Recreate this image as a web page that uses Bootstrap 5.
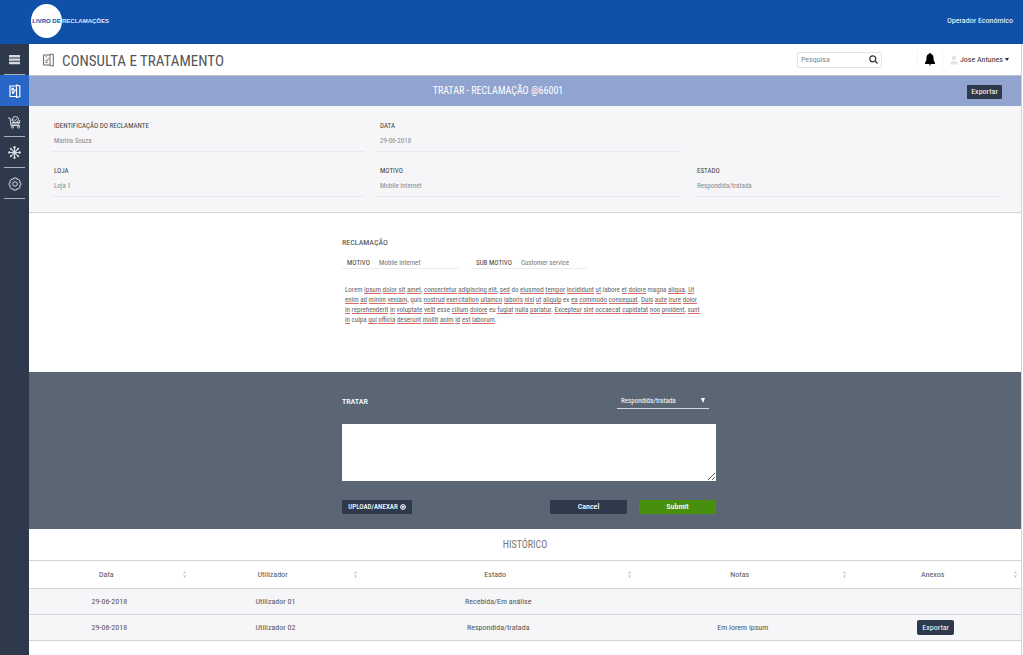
<!DOCTYPE html>
<html lang="pt">
<head>
<meta charset="utf-8">
<meta name="viewport" content="width=device-width, initial-scale=1">
<title>Livro de Reclamações</title>
<link href="https://cdn.jsdelivr.net/npm/bootstrap@5.3.0/dist/css/bootstrap.min.css" rel="stylesheet">
<style>
:root{--navy:#2e394b;--brand:#0f50a9;--rule:#d2d4da}
body{font-family:"Roboto Condensed","Roboto",sans-serif;font-size:8px;line-height:12px;color:#555;background:#fff}
a{color:inherit;text-decoration:none}
svg{display:block;flex:none}
.topbar{height:44px;background:var(--brand);color:#fff;padding:0 10px 2px 31px}
.brandmark{font-family:"Liberation Sans",sans-serif;font-size:6px;font-weight:700;color:#dfeaff}
.disc{width:31px;height:34px;border-radius:50%;background:#fff;color:var(--brand);white-space:nowrap}
.side{width:29px;background:var(--navy);flex:none}
.side a{height:31px;color:#d5dae2;display:flex;align-items:center;justify-content:center;position:relative}
.side a::after{content:"";position:absolute;left:4px;right:4px;bottom:0;height:1px;background:#a9b0bd}
.side a.active{background:#2867c8;color:#fff}
.side a.active::after{display:none}
.page{border-right:1px solid #cfd3dc;margin-right:1px;min-width:0}
.titlebar{height:32px;padding:0 12px 0 14px;border-bottom:1px solid #b9c4cf}
.titlebar h1{font-size:15px;line-height:20px;color:#555;padding-top:2px}
.searchbox{width:85px;height:16px;border:1px solid #e4e4e4;border-radius:2px;padding:0 3px}
.searchbox input{color:#777;border:0;outline:0;min-width:0;background:none;padding:0}
.searchbox input::placeholder{color:#888}
.plain{border:0;background:none;padding:0;color:#333}
.bell{margin-left:35px;padding:2px 7px;border:1px solid #f5f5f5;border-width:0 1px}
.user{margin-left:7px;gap:2px}
.caret{border:2px solid transparent;border-top:3px solid #222;border-bottom:0}
.caption{height:30px;background:#91a4d0;color:#fff;padding-right:19px}
.caption h2,.history h2{font-size:10px;line-height:30px}
.action{background:var(--navy);color:#fff;border:0;border-radius:1px;height:14px;line-height:14px;padding:0}
.export{width:35px;margin-top:2px}
.info{background:#f6f6f9;border-bottom:1px solid var(--rule);padding:12px 19px 15px 22px;display:grid;grid-template-columns:313fr 304fr 308fr;column-gap:13px;row-gap:11px;margin:0;font-size:7px}
.info>div{border-bottom:1px solid #e9e9ee;padding:2px 3px 4px;height:34px}
.info>.blank{border:0}
.info dt{font-weight:400;color:#444}
.info dd{margin:3px 0 0;color:#8a8a8a}
.sheet{width:374px;max-width:100%;margin:0 auto}
.shift{padding-left:8px}
.complaint{height:159px;padding-top:23px}
.complaint h3,.treat h3{font-size:8px;line-height:14px;margin:0}
.complaint h3{color:#444}
.pairs{margin-top:7px;gap:12px;font-size:7px}
.pair{width:117px;border-bottom:1px solid #eee;padding-left:5px;height:12px;line-height:12px;display:flex;gap:9px;color:#444}
.pair span+span{color:#777}
.lorem{font-size:7px;line-height:10px;color:#666;margin:16px 0 0;padding-left:3px;white-space:nowrap}
.lorem u{text-decoration:none;background:linear-gradient(#dd6a6a,#dd6a6a) left bottom/100% 1px no-repeat}
.treat{height:157px;background:#5b6675;color:#fff;padding-top:18px}
.treat select{width:92px;height:19px;margin-right:7px;border:0;border-bottom:1px solid #d5d9df;background:none;color:#fff;appearance:none;padding:4px 4px 0;font-size:7px;outline:0;display:block}
.treat select option{color:#333}
.pick{position:relative}
.pick::after{content:"";position:absolute;right:11px;top:8px;border:2px solid transparent;border-top:5px solid #fff;border-bottom:0}
.treat textarea{height:57px;border:0;background:#fff;margin-top:15px;display:block}
.buttons{margin-top:19px;gap:12px}
.wide{width:77px;font-weight:500}
.upload{width:70px;gap:2px;font-size:7px;font-weight:500}
.submit{background:#498f0e}
.history h2{height:32px;padding-top:1px;color:#777;border-bottom:1px solid var(--rule)}
.log{table-layout:fixed;width:100%;text-align:center;border-collapse:separate;border-spacing:0}
.log th{font-weight:400;height:28px;padding:0 6px 0 0;border-bottom:1px solid var(--rule);position:relative}
.log th svg{position:absolute;right:4px;top:10px}
.log td{height:26px;padding:0;background:#f6f6f9;border-bottom:1px solid var(--rule)}
.log td .action{border-radius:2px;height:15px;width:37px;line-height:15px;display:block;margin:0 auto}
</style>
</head>
<body>
<svg width="0" height="0" class="position-absolute" aria-hidden="true"><symbol id="sort" viewBox="0 0 3 7"><path d="M0 2.500 1.500 0 3 2.500zM0 4.500h3L1.500 7z" fill="#c4c4c4"/></symbol></svg>
<div class="min-vh-100 d-flex flex-column">
<header class="topbar d-flex align-items-center justify-content-between">
  <a href="#" class="brandmark d-flex align-items-center"><span class="disc d-flex align-items-center justify-content-center">LIVRO DE</span><span>RECLAMAÇÕES</span></a>
  <span>Operador Económico</span>
</header>
<div class="d-flex flex-grow-1">
  <nav class="side" aria-label="Menu principal">
    <a href="#" aria-label="Menu"><svg width="11" height="10" viewBox="0 0 11 10" fill="currentColor"><path d="M0 0h11v2.400H0zM0 3.400h11v2.400H0zM0 6.800h11v2.400H0z"/></svg></a>
    <a href="#" class="active" aria-label="Consulta"><svg width="12" height="14" viewBox="0 0 12 14" fill="none" stroke="currentColor" stroke-width="1.200"><path d="M7.500 2H1v10.500h6.500M7.500 1 10.800 2v10.500l-3.300 1zM3 4.300h1.500v1.500H3zM3 9.500h1.700M2.800 7.500 4.200 9 6.500 5.500"/></svg></a>
    <a href="#" aria-label="Compras"><svg width="13" height="14" viewBox="0 0 13 14" fill="none" stroke="currentColor"><path d="M0 3h2l1 7.500h9M3 9h8l1-4M3 5h2"/><circle cx="7.500" cy="4.500" r="3"/><path d="m6 4.500 1.200 1.200L9 3.500M4 7.500h7.500"/><circle cx="4.500" cy="12.200" r="1"/><circle cx="10.500" cy="12.200" r="1"/></svg></a>
    <a href="#" aria-label="Rede"><svg width="13" height="13" viewBox="0 0 13 13" fill="none" stroke="currentColor" stroke-width="1.200"><path d="M6.500 1v11M1 6.500h11M2.700 2.700l7.600 7.600M10.300 2.700l-7.600 7.600"/><g fill="currentColor" stroke="none"><circle cx="6.500" cy="6.500" r="2"/><circle cx="6.500" cy="1.300" r="1.200"/><circle cx="6.500" cy="11.700" r="1.200"/><circle cx="1.300" cy="6.500" r="1.200"/><circle cx="11.700" cy="6.500" r="1.200"/><circle cx="2.800" cy="2.800" r="1"/><circle cx="10.200" cy="2.800" r="1"/><circle cx="2.800" cy="10.200" r="1"/><circle cx="10.200" cy="10.200" r="1"/></g></svg></a>
    <a href="#" aria-label="Definições"><svg width="14" height="14" viewBox="0 0 14 14" fill="none" stroke="currentColor"><path d="M5.500 1h3l.5 1.500 1.500-.4 1.600 2-.7 1.400 1.600.8v1.600l-1.600.8.7 1.500-1.700 1.900-1.400-.5L8.500 13h-3L5 11.600l-1.500.5-1.700-1.900.7-1.500L1 7.900V6.300l1.500-.8-.7-1.400 1.700-2L5 2.500z"/><circle cx="7" cy="7" r="2.300"/></svg></a>
  </nav>
  <main class="page flex-grow-1">
    <div class="titlebar d-flex align-items-center">
      <svg width="11" height="14" viewBox="0 0 11 14" fill="none" stroke="#666"><path d="M7 2H.5v10H7M7 1l3.300.5v11.500L7 12.500zM2.500 4h1.500M2.500 9.500h2M2.300 7l1.300 1.300 2-3"/></svg>
      <h1 class="mb-0 ms-2 me-auto fw-normal">CONSULTA E TRATAMENTO</h1>
      <form class="searchbox d-flex align-items-center" role="search">
        <input type="search" class="flex-grow-1" placeholder="Pesquisa" aria-label="Pesquisa">
        <button type="button" class="plain" aria-label="Procurar"><svg width="9" height="9" viewBox="0 0 9 9" fill="none" stroke="#333" stroke-width="1.200"><circle cx="3.800" cy="3.800" r="3"/><path d="m6 6 2.500 2.500"/></svg></button>
      </form>
      <button type="button" class="plain bell" aria-label="Notificações"><svg width="10" height="13" viewBox="0 0 10 13" fill="#000"><path d="M5 0c.7 0 .9.500.9 1C8 1.500 8.500 3 8.500 5c0 2.500.5 3.500 1.500 4.500V11H0V9.500C1 8.500 1.500 7.500 1.500 5c0-2 .5-3.500 2.600-4 0-.5.2-1 .9-1M3.700 11.500h2.600C6 12.700 4 12.700 3.700 11.500"/></svg></button>
      <button type="button" class="plain user d-flex align-items-center"><svg width="8" height="10" viewBox="0 0 8 10" fill="#e2e2e2"><circle cx="4" cy="3" r="2.200"/><path d="M0 9.500C0 7 2 6 4 6s4 1 4 3.500z"/></svg><span>Jose Antunes</span><span class="caret"></span></button>
    </div>
    <div class="caption d-flex align-items-center">
      <h2 class="mb-0 flex-grow-1 text-center fw-normal">TRATAR - RECLAMAÇÃO @66001</h2>
      <button type="button" class="action export">Exportar</button>
    </div>
    <dl class="info">
      <div><dt>IDENTIFICAÇÃO DO RECLAMANTE</dt><dd>Marina Souza</dd></div>
      <div><dt>DATA</dt><dd>29-06-2018</dd></div>
      <div class="blank"></div>
      <div><dt>LOJA</dt><dd>Loja 1</dd></div>
      <div><dt>MOTIVO</dt><dd>Mobile internet</dd></div>
      <div><dt>ESTADO</dt><dd>Respondida/tratada</dd></div>
    </dl>
    <section class="complaint shift"><div class="sheet">
      <h3 class="fw-normal">RECLAMAÇÃO</h3>
      <div class="d-flex pairs">
        <div class="pair"><span>MOTIVO</span><span>Mobile internet</span></div>
        <div class="pair"><span>SUB MOTIVO</span><span>Customer service</span></div>
      </div>
      <p class="lorem">Lorem <u>ipsum</u> <u>dolor</u> <u>sit</u> <u>amet</u>, <u>consectetur</u> <u>adipiscing</u> <u>elit</u>, <u>sed</u> do <u>eiusmod</u> <u>tempor</u> <u>incididunt</u> <u>ut</u> labore <u>et</u> <u>dolore</u> magna <u>aliqua</u>. <u>Ut</u><br><u>enim</u> <u>ad</u> <u>minim</u> <u>veniam</u>, quis <u>nostrud</u> <u>exercitation</u> <u>ullamco</u> <u>laboris</u> <u>nisi</u> <u>ut</u> <u>aliquip</u> ex <u>ea</u> <u>commodo</u> <u>consequat</u>. <u>Duis</u> <u>aute</u> <u>irure</u> <u>dolor</u><br><u>in</u> <u>reprehenderit</u> <u>in</u> <u>voluptate</u> <u>velit</u> esse <u>cillum</u> <u>dolore</u> eu <u>fugiat</u> <u>nulla</u> <u>pariatur</u>. <u>Excepteur</u> <u>sint</u> <u>occaecat</u> <u>cupidatat</u> <u>non</u> <u>proident</u>, <u>sunt</u><br><u>in</u> culpa <u>qui</u> <u>officia</u> <u>deserunt</u> <u>mollit</u> <u>anim</u> <u>id</u> <u>est</u> <u>laborum</u>.</p>
    </div></section>
    <section class="treat shift"><form class="sheet">
      <div class="d-flex justify-content-between align-items-end">
        <h3><label for="reply">TRATAR</label></h3>
        <div class="pick"><select aria-label="Estado"><option>Respondida/tratada</option><option>Recebida/Em análise</option></select></div>
      </div>
      <textarea id="reply" class="w-100"></textarea>
      <div class="d-flex buttons">
        <button type="button" class="action upload d-flex align-items-center justify-content-center me-auto"><span>UPLOAD/ANEXAR</span><svg width="6" height="6" viewBox="0 0 6 6" fill="none" stroke="#fff"><circle cx="3" cy="3" r="2.400"/><path d="M3 1.500v3M1.500 3h3"/></svg></button>
        <button type="button" class="action wide">Cancel</button>
        <button type="submit" class="action wide submit">Submit</button>
      </div>
    </form></section>
    <section class="history">
      <h2 class="mb-0 text-center fw-normal">HISTÓRICO</h2>
      <table class="log">
        <colgroup><col style="width:16.2%"><col style="width:17.3%"><col style="width:27.6%"><col style="width:21.7%"><col style="width:17.2%"></colgroup>
        <thead><tr><th>Data<svg width="3" height="7"><use href="#sort"/></svg></th><th>Utilizador<svg width="3" height="7"><use href="#sort"/></svg></th><th>Estado<svg width="3" height="7"><use href="#sort"/></svg></th><th>Notas<svg width="3" height="7"><use href="#sort"/></svg></th><th>Anexos<svg width="3" height="7"><use href="#sort"/></svg></th></tr></thead>
        <tbody>
          <tr><td>29-06-2018</td><td>Utilizador 01</td><td>Recebida/Em análise</td><td></td><td></td></tr>
          <tr><td>29-06-2018</td><td>Utilizador 02</td><td>Respondida/tratada</td><td>Em lorem ipsum</td><td><button type="button" class="action">Exportar</button></td></tr>
        </tbody>
      </table>
    </section>
  </main>
</div>
</div>
<script src="https://cdn.jsdelivr.net/npm/bootstrap@5.3.0/dist/js/bootstrap.bundle.min.js"></script>
</body>
</html>
